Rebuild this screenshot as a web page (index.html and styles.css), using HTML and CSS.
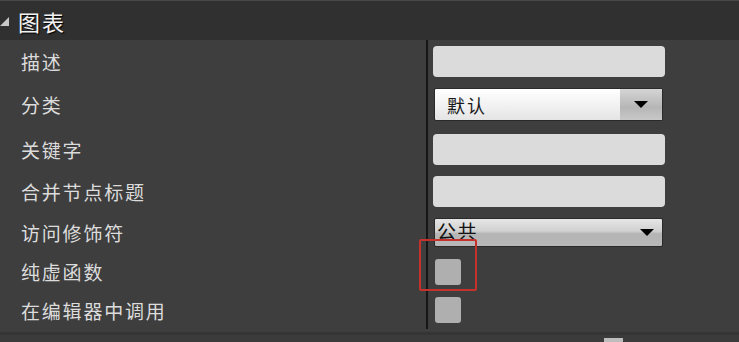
FILE: index.html
```html
<!DOCTYPE html>
<html lang="zh-CN">
<head>
    <meta charset="UTF-8">
    <title>图表</title>
    <link rel="stylesheet" href="styles.css">
</head>
<body>
<div class="panel">
    <div class="panel-header">
        <span class="arrow"></span>
        <span class="title">图表</span>
    </div>

    <div class="props">
        <div class="label">描述</div>
        <div class="value"><div class="text-field"></div></div>

        <div class="label">分类</div>
        <div class="value">
            <div class="combo">
                <span class="combo-text">默认</span>
                <span class="combo-btn"><span class="caret"></span></span>
            </div>
        </div>

        <div class="label">关键字</div>
        <div class="value"><div class="text-field"></div></div>

        <div class="label">合并节点标题</div>
        <div class="value"><div class="text-field"></div></div>

        <div class="label">访问修饰符</div>
        <div class="value">
            <div class="select">
                <span class="select-text">公共</span>
                <span class="caret"></span>
            </div>
        </div>

        <div class="label">纯虚函数</div>
        <div class="value">
            <div class="checkbox highlighted"></div>
        </div>

        <div class="label">在编辑器中调用</div>
        <div class="value"><div class="checkbox"></div></div>
    </div>

    <div class="panel-footer">
        <span class="grip"></span>
    </div>
</div>
</body>
</html>
```

FILE: styles.css
```css
body {
    margin: 0;
    background: #3e3e3e;
    font-family: "Noto Sans CJK SC", "Noto Sans", sans-serif;
    overflow: hidden;
}
.panel {
    width: 739px;
    height: 342px;
    display: flex;
    flex-direction: column;
    background: #3e3e3e;
}
.panel-header {
    height: 40px;
    box-sizing: border-box;
    border-top: 1px solid #474747;
    background: #303030;
    display: flex;
    align-items: center;
    gap: 9px;
}
.arrow {
    width: 0;
    height: 0;
    border-left: 9px solid transparent;
    border-bottom: 9px solid #c8c8c8;
    margin-top: 2px;
}
.title {
    color: #f2f2f2;
    font-size: 22px;
    letter-spacing: 2px;
    text-shadow: 1px 1px 1px #000;
}
.props {
    display: grid;
    grid-template-columns: 426px 1fr;
    grid-template-rows: 42px 45px 44px 41px 40px 39px 38px;
}
.label {
    color: #dcdcdc;
    font-size: 19px;
    letter-spacing: 1.8px;
    padding-left: 21px;
    display: flex;
    align-items: center;
}
.value {
    border-left: 2px solid #161616;
    padding-left: 5px;
    display: flex;
    align-items: center;
    position: relative;
}
.text-field {
    width: 232px;
    height: 31px;
    border-radius: 4px;
    background: #dbdbdb;
}
.combo {
    width: 229px;
    height: 33px;
    box-sizing: border-box;
    margin-left: 1px;
    border: 1px solid #2a2a2a;
    border-radius: 2px;
    background: linear-gradient(to bottom, #ffffff, #f0f0f0 60%, #e4e4e4);
    display: flex;
    align-items: center;
}
.combo-text {
    flex: 1;
    font-size: 18px;
    letter-spacing: 2px;
    color: #1a1a1a;
    padding-left: 12px;
}
.combo-btn {
    width: 42px;
    height: 100%;
    background: linear-gradient(to bottom, #d4d4d4, #b6b6b6 60%, #c8c8c8);
    display: flex;
    align-items: center;
    justify-content: center;
}
.caret {
    width: 0;
    height: 0;
    border-left: 7px solid transparent;
    border-right: 7px solid transparent;
    border-top: 7px solid #000;
}
.select {
    width: 229px;
    height: 29px;
    box-sizing: border-box;
    margin-left: 1px;
    border: 1px solid #2a2a2a;
    border-radius: 2px;
    background: linear-gradient(to bottom, #e6e6e6, #d0d0d0 45%, #b4b4b4 55%, #b8b8b8);
    display: flex;
    align-items: center;
    padding-right: 8px;
}
.select-text {
    flex: 1;
    font-size: 19px;
    letter-spacing: 1.5px;
    color: #111;
    padding-left: 2px;
    line-height: 1;
    margin-top: -3px;
}
.checkbox {
    width: 26px;
    height: 26px;
    margin-left: 2px;
    border-radius: 3px;
    background: #afafaf;
}
.highlighted::after {
    content: "";
    position: absolute;
    left: -9px;
    top: -13px;
    width: 54px;
    height: 48px;
    border: 2px solid #c4322b;
    border-radius: 2px;
}
.panel-footer {
    flex: 1;
    margin-top: 3px;
    border-top: 3px solid #353535;
    background: #3b3b3b;
    position: relative;
}
.grip {
    position: absolute;
    left: 604px;
    bottom: 0;
    width: 19px;
    height: 4px;
    background: #bdbdbd;
}
```
